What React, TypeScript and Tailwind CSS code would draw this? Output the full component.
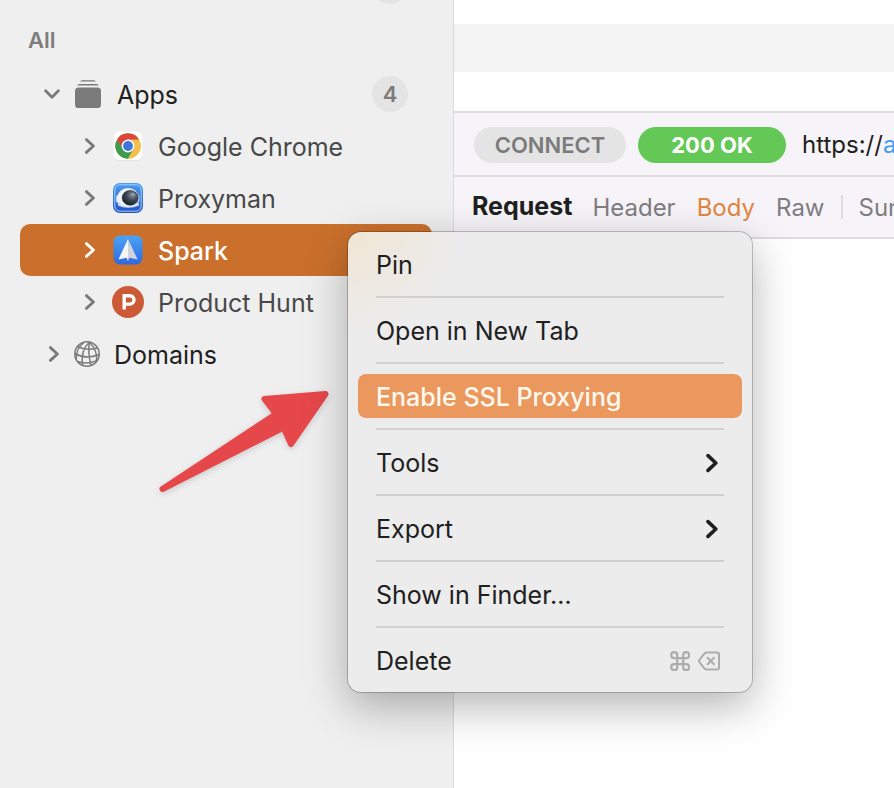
import type { ReactNode } from "react";

function Chevron({ down = false }: { down?: boolean }) {
  return (
    <span className="flex w-4 shrink-0 items-center justify-center">
      {down ? (
        <svg width="16" height="10" viewBox="0 0 16 10" fill="none" stroke="currentColor" strokeWidth="2.8" strokeLinecap="round" strokeLinejoin="round">
          <path d="M1.6 1.8 8 8.200l6.400-6.400" />
        </svg>
      ) : (
        <svg width="12" height="16" viewBox="0 0 12 16" fill="none" stroke="currentColor" strokeWidth="2.8" strokeLinecap="round" strokeLinejoin="round">
          <path d="M2.400 1.600 9.400 8l-7 6.400" />
        </svg>
      )}
    </span>
  );
}

function StackIcon() {
  return (
    <svg width="28" height="30" viewBox="0 0 28 30" fill="#7a7a7a">
      <path d="M6.200 2.600Q6.800 1.200 8.200 1.200h11.600Q21.200 1.200 21.800 2.600ZM3.400 6.400Q4 5 5.400 5h17.200Q24 5 24.600 6.400Z" />
      <rect x="1" y="8.600" width="26" height="20.400" rx="3.600" />
    </svg>
  );
}

function ChromeIcon() {
  return (
    <svg width="32" height="32" viewBox="0 0 32 32">
      <rect x="1.500" y="2" width="29" height="29" rx="6.500" fill="#dcdcdc" />
      <rect x="1.500" y="1.500" width="29" height="28.800" rx="6.500" fill="#fff" />
      <circle cx="16" cy="16" r="12.700" fill="#f3c04a" />
      <path d="M5 9.650A12.700 12.700 0 0 1 27 9.650H16L10.500 19.200Z" fill="#d8463c" />
      <path d="M5 9.650A12.700 12.700 0 0 0 16 28.700L21.500 19.200 16 16H8.700Z" fill="#3d9b51" />
      <path d="M16 9.650H27A12.700 12.700 0 0 1 16 28.700L21.500 19.200Z" fill="#f3c04a" />
      <circle cx="16" cy="16" r="6.400" fill="#fff" />
      <circle cx="16" cy="16" r="4.900" fill="#3f75dc" />
    </svg>
  );
}

function ProxymanIcon() {
  return (
    <svg width="32" height="32" viewBox="0 0 32 32">
      <defs>
        <linearGradient id="pm-bg" x1="0" y1="0" x2="0" y2="1">
          <stop offset="0" stopColor="#4d9df0" />
          <stop offset="1" stopColor="#2450c4" />
        </linearGradient>
        <radialGradient id="pm-visor" cx="0.65" cy="0.3" r="0.75">
          <stop offset="0" stopColor="#8795a2" />
          <stop offset="0.5" stopColor="#3d4854" />
          <stop offset="1" stopColor="#171f28" />
        </radialGradient>
      </defs>
      <rect x="1" y="1" width="30" height="30" rx="7" fill="url(#pm-bg)" />
      <rect x="2.800" y="2.800" width="26.400" height="26.400" rx="5.200" fill="none" stroke="#9fd0fb" strokeWidth="1" />
      <path d="M6 20.500q9 5 20.500-.5l.5 3.500q-11 4.500-21 0Z" fill="#d3dff6" />
      <rect x="4.200" y="13" width="4" height="8" rx="2" fill="#dce6f7" />
      <rect x="24.500" y="13" width="3" height="7" rx="1.500" fill="#b9cdf0" />
      <ellipse cx="16" cy="15.500" rx="10.600" ry="9.400" fill="#edf2fb" />
      <ellipse cx="18.200" cy="15.800" rx="8" ry="7.400" fill="url(#pm-visor)" stroke="#18212c" strokeWidth="0.600" />
      <ellipse cx="21" cy="12.500" rx="1.800" ry="1.100" fill="#b9c5ce" opacity="0.500" />
    </svg>
  );
}

function SparkIcon() {
  return (
    <svg width="32" height="32" viewBox="0 0 32 32">
      <defs>
        <linearGradient id="spark-bg" x1="0" y1="0" x2="0" y2="1">
          <stop offset="0" stopColor="#4ba3f5" />
          <stop offset="1" stopColor="#2f68e0" />
        </linearGradient>
      </defs>
      <rect x="1.500" y="1.500" width="29" height="29" rx="6.500" fill="url(#spark-bg)" />
      <path d="M16 5 25.600 25.400 17.400 23.700 16 27Z" fill="#cfd3db" />
      <path d="M16 5 6.400 25.400 14.600 23.700 16 27Z" fill="#f5f6f8" />
    </svg>
  );
}

function ProductHuntIcon() {
  return (
    <svg width="32" height="32" viewBox="0 0 32 32">
      <circle cx="16" cy="16" r="16" fill="#cc5a37" />
      <path d="M12.200 23.500V9.700h5.600a4.200 4.200 0 0 1 0 8.400h-5.600" fill="none" stroke="#fff" strokeWidth="3.400" />
    </svg>
  );
}

function GlobeIcon() {
  return (
    <svg width="28" height="28" viewBox="0 0 28 28" fill="none" stroke="#7b7b7b" strokeWidth="1.500">
      <circle cx="14" cy="14" r="12.200" />
      <path d="M16.500 2Q7.500 10 9.500 25M16.500 2Q14.500 12 18 25.500M16.500 2Q25 11 23.500 21.500M11 2.500Q3 8 3.200 19.500M4.500 6.500Q13 11 24.500 8M2 13.500Q13 20 26 14.500M4.500 21.500Q13 24.500 23 21" />
    </svg>
  );
}

function Count({ value }: { value: string }) {
  return (
    <span className="ml-auto flex size-9 items-center justify-center rounded-full bg-[#e4e4e4] text-[22px] font-semibold text-[#7c7c7c]">
      {value}
    </span>
  );
}

const apps: { name: string; icon: ReactNode; selected?: boolean }[] = [
  { name: "Google Chrome", icon: <ChromeIcon /> },
  { name: "Proxyman", icon: <ProxymanIcon /> },
  { name: "Spark", icon: <SparkIcon />, selected: true },
  { name: "Product Hunt", icon: <ProductHuntIcon /> },
];

function Sidebar() {
  return (
    <nav aria-label="Sources" className="w-[454px] shrink-0 border-r border-[#dadada] bg-[#efefef] pr-[21px] pl-5 text-[25px] leading-8">
      <div className="flex h-3 items-end overflow-hidden">
        <div className="flex h-[52px] w-full shrink-0 items-center pr-6">
          <Count value="" />
        </div>
      </div>
      <h2 className="flex h-14 items-center pl-2 text-[22px] font-semibold text-[#7d7d7d]">All</h2>
      <ul>
        <li>
          <button className="flex h-[52px] w-full items-center pr-6 pl-6 text-left text-[#7a7a7a]">
            <Chevron down />
            <span className="mr-[15px] ml-3.5"><StackIcon /></span>
            <span className="pt-0.5 text-[#202020]">Apps</span>
            <Count value="4" />
          </button>
          <ul>
            {apps.map((app) => (
              <li key={app.name}>
                <button
                  className={
                    app.selected
                      ? "flex h-[52px] w-full items-center rounded-[10px] bg-[#cb702c] pl-[62px] text-left text-white"
                      : "flex h-[52px] w-full items-center pl-[62px] text-left text-[#7a7a7a]"
                  }
                >
                  <Chevron />
                  <span className="mr-3.5 ml-3.5">{app.icon}</span>
                  <span className={app.selected ? "pt-0.5 font-medium" : "pt-0.5 text-[#484848]"}>{app.name}</span>
                </button>
              </li>
            ))}
          </ul>
        </li>
        <li>
          <button className="flex h-[52px] w-full items-center pl-[26px] text-left text-[#7a7a7a]">
            <Chevron />
            <span className="mr-[13px] ml-[11px]"><GlobeIcon /></span>
            <span className="pt-0.5 text-[#202020]">Domains</span>
          </button>
        </li>
      </ul>
    </nav>
  );
}

function Detail() {
  return (
    <main className="min-w-0 flex-1 overflow-hidden whitespace-nowrap">
      <div className="h-6" />
      <div className="h-12 bg-[#f4f4f4]" />
      <div className="h-[39px]" />
      <div className="flex h-16 items-center border-t-2 border-[#dedce0] bg-[#f6f4f8] pt-0.5 pl-5 text-[24px]">
        <span className="flex h-9 w-[152px] shrink-0 items-center justify-center rounded-full bg-[#e4e4e4] text-[22px] font-semibold text-[#7b7b7b]">
          CONNECT
        </span>
        <span className="ml-3 flex h-9 w-[148px] shrink-0 items-center justify-center rounded-full bg-[#63c856] text-[22px] font-bold text-white">
          200 OK
        </span>
        <span className="ml-4 text-[#202020]">
          https://<span className="text-[#3f9cf2]">a</span>
        </span>
      </div>
      <div className="flex h-16 items-center border-y-2 border-[#dedce0] bg-[#f6f4f8] pl-[18px] text-[24px] text-[#7f7d81]">
        <h1 className="mr-5 text-[25px] font-bold text-[#202020]">Request</h1>
        <button className="mr-[21px] pt-0.5">Header</button>
        <button className="mr-[21px] pt-0.5 text-[#df873f]">Body</button>
        <button className="pt-0.5">Raw</button>
        <span className="mx-4 h-6 w-0.5 shrink-0 bg-[#dcdadf]" />
        <button className="pt-0.5">Summary</button>
      </div>
    </main>
  );
}

function SubmenuArrow() {
  return (
    <svg width="14" height="20" viewBox="0 0 14 20" fill="none" stroke="#202020" strokeWidth="3.600" strokeLinecap="round" strokeLinejoin="round">
      <path d="M2 2.600 9.800 10 2 17.400" />
    </svg>
  );
}

function DeleteShortcut() {
  return (
    <span className="flex items-center gap-2">
      <svg width="20" height="20" viewBox="0 0 20 20" fill="none" stroke="#adadad" strokeWidth="2.200">
        <path d="M7.500 7.500V4.500a3 3 0 1 0-3 3h12a3 3 0 1 0-3-3v12a3 3 0 1 0 3-3h-12a3 3 0 1 0 3 3Z" transform="translate(-.3 -.3)" />
      </svg>
      <svg width="22" height="20" viewBox="0 0 22 20" fill="none" stroke="#adadad" strokeWidth="2" strokeLinejoin="round" strokeLinecap="round">
        <path d="M8.300 1.500H19a2 2 0 0 1 2 2v13a2 2 0 0 1-2 2H8.300a2 2 0 0 1-1.500-.7L1.600 11.300a2 2 0 0 1 0-2.600L6.800 2.200a2 2 0 0 1 1.500-.7ZM9.600 6.700l6.400 6.600M16 6.700l-6.400 6.600" />
      </svg>
    </span>
  );
}

const menuItems: { label: string; active?: boolean; trailing?: ReactNode }[] = [
  { label: "Pin" },
  { label: "Open in New Tab" },
  { label: "Enable SSL Proxying", active: true },
  { label: "Tools", trailing: <SubmenuArrow /> },
  { label: "Export", trailing: <SubmenuArrow /> },
  { label: "Show in Finder…" },
  { label: "Delete", trailing: <DeleteShortcut /> },
];

function ContextMenu() {
  return (
    <ul
      role="menu"
      className="absolute top-[232px] left-[348px] w-[404px] rounded-[13px] bg-[#ececec] bg-[radial-gradient(ellipse_110px_100px_at_top_left,#f0e5d3,#ececec)] p-2.5 text-[25px] leading-8 text-[#202020] shadow-[0_0_0_1px_rgba(0,0,0,0.22),0_14px_44px_rgba(0,0,0,0.3)]"
    >
      {menuItems.map((item, i) => (
        <li key={item.label} role="none">
          {i > 0 && <hr className="mx-[18px] my-2.5 border-t-2 border-[#d0d0d0]" />}
          <button
            role="menuitem"
            className={
              item.active
                ? "flex h-11 w-full items-center justify-between rounded-lg bg-[#eb985f] px-[18px] pt-0.5 text-left font-medium text-[#fff8ee]"
                : "flex h-11 w-full items-center justify-between px-[22px] pt-0.5 pl-[18px] text-left"
            }
          >
            {item.label}
            {item.trailing}
          </button>
        </li>
      ))}
    </ul>
  );
}

function PointerArrow() {
  return (
    <svg
      className="absolute top-[384px] left-[154px] drop-shadow-[0_2px_3px_rgba(0,0,0,0.15)]"
      width="182"
      height="116"
      viewBox="154 384 182 116"
      fill="#e6474b"
      stroke="#e6474b"
      strokeWidth="6"
      strokeLinejoin="round"
    >
      <path d="M162.500 489 276 414 264.500 399 325.500 394 291 444 283.500 427.500Z" />
    </svg>
  );
}

export default function App() {
  return (
    <div className="relative flex min-h-screen overflow-hidden bg-white font-['Inter','Liberation_Sans',sans-serif]">
      <Sidebar />
      <Detail />
      <PointerArrow />
      <ContextMenu />
    </div>
  );
}
